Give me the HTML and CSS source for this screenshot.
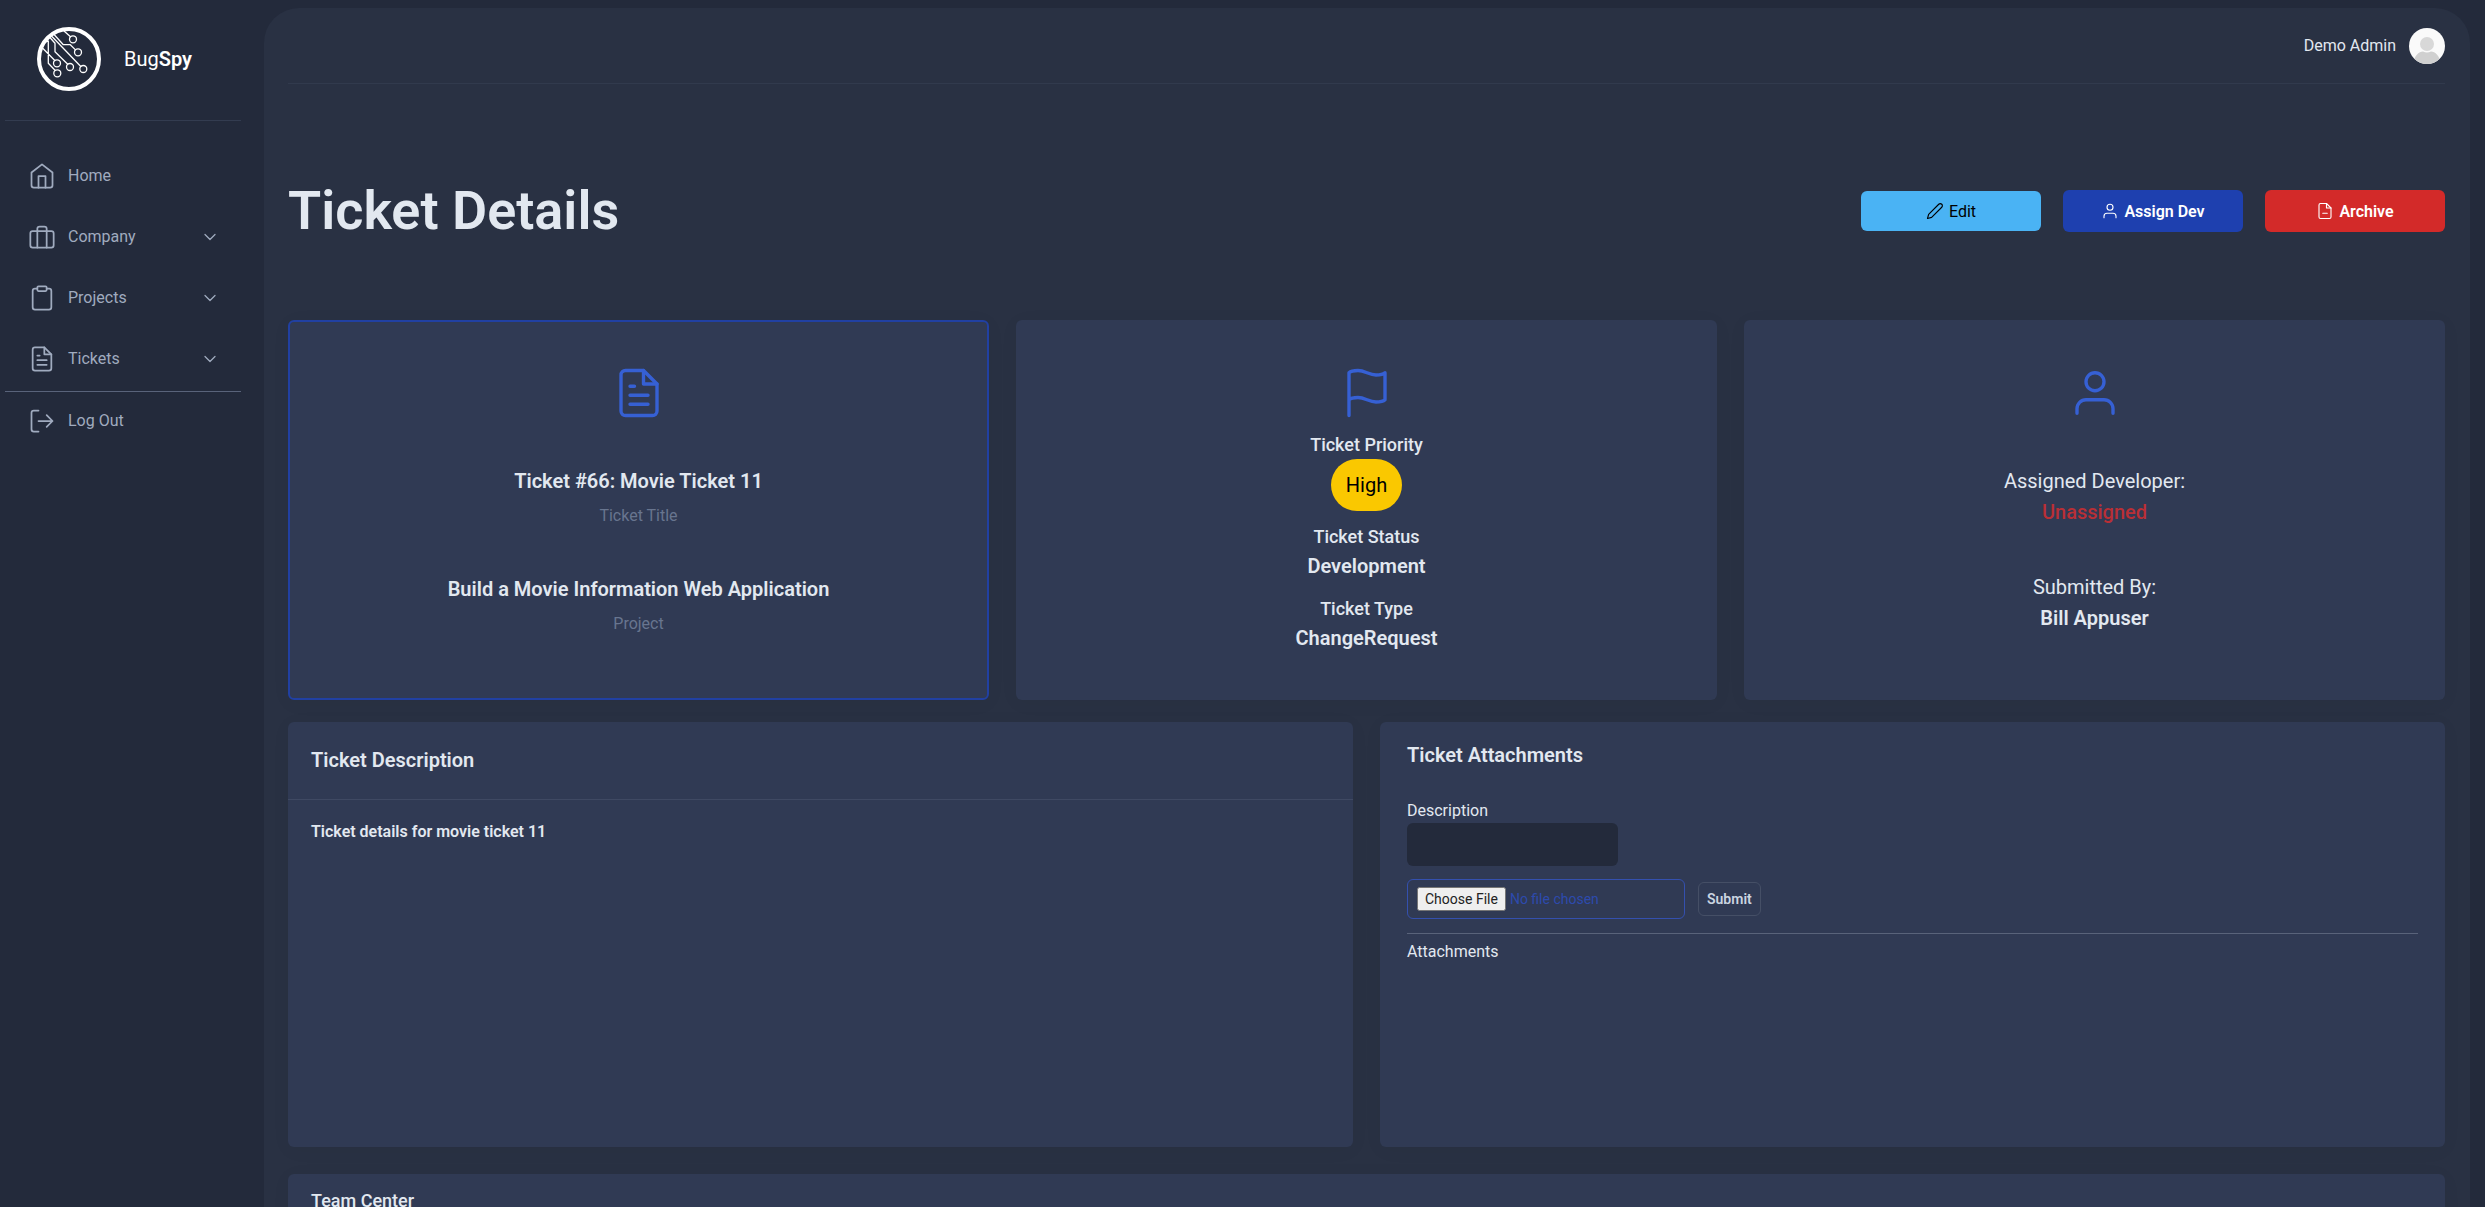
FILE: index.html
```
<!DOCTYPE html>
<html lang="en">
    <head>
        <title>BugSpy - Ticket Details</title>
        <meta charset="utf-8"/>
        <meta name="viewport" content="width=device-width,initial-scale=1"/>
        <link rel="stylesheet" href="styles.css">
    </head>
    <body>
        <div class="page">
            <aside class="sidebar">
                <a class="brand" href="#">
                    <svg class="brand-logo" viewBox="0 0 64 64">
                        <circle cx="32" cy="32" r="30" stroke-width="4"/>
                        <path d="M27 4l6.500 5.800M17.300 7.700l9 10h7l5.200 5.200M14 8.500l29.800 31M12.500 10l5.500 6.300v8.400l12.500 12.300M5 20.500l12.800 13M8 15l3.300 -1v22.300l6.700 7"/>
                        <circle cx="36" cy="12.300" r="3.500"/>
                        <circle cx="41" cy="25.300" r="3.500"/>
                        <circle cx="46.300" cy="42" r="3.500"/>
                        <circle cx="33" cy="40" r="3.500"/>
                        <circle cx="20" cy="36.300" r="3.500"/>
                        <circle cx="20.300" cy="46.300" r="3.500"/>
                    </svg>
                    <span>Bug<b>Spy</b></span>
                </a>
                <hr class="line-soft">
                <ul class="menu">
                    <li><a href="#">
                        <svg class="icon" viewBox="0 0 24 24"><path d="M3 9l9-7 9 7v11a2 2 0 0 1-2 2H5a2 2 0 0 1-2-2z"/><path d="M9 22V12h6v10"/></svg>
                        <span>Home</span>
                    </a></li>
                    <li><a href="#">
                        <svg class="icon" viewBox="0 0 24 24"><rect x="2" y="7" width="20" height="14" rx="2"/><path d="M16 21V5a2 2 0 0 0-2-2h-4a2 2 0 0 0-2 2v16"/></svg>
                        <span>Company</span>
                        <svg class="arrow" viewBox="0 0 24 24"><path d="M6 9l6 6 6-6"/></svg>
                    </a></li>
                    <li><a href="#">
                        <svg class="icon" viewBox="0 0 24 24"><path d="M16 4h2a2 2 0 0 1 2 2v14a2 2 0 0 1-2 2H6a2 2 0 0 1-2-2V6a2 2 0 0 1 2-2h2"/><rect x="8" y="2" width="8" height="4" rx="1"/></svg>
                        <span>Projects</span>
                        <svg class="arrow" viewBox="0 0 24 24"><path d="M6 9l6 6 6-6"/></svg>
                    </a></li>
                    <li><a href="#">
                        <svg class="icon" viewBox="0 0 24 24"><path d="M14 2H6a2 2 0 0 0-2 2v16a2 2 0 0 0 2 2h12a2 2 0 0 0 2-2V8z"/><path d="M14 2v6h6M16 13H8M16 17H8M10 9H8"/></svg>
                        <span>Tickets</span>
                        <svg class="arrow" viewBox="0 0 24 24"><path d="M6 9l6 6 6-6"/></svg>
                    </a></li>
                </ul>
                <hr class="line">
                <ul class="menu menu-bottom">
                    <li><a href="#">
                        <svg class="icon" viewBox="0 0 24 24"><path d="M9 21H5a2 2 0 0 1-2-2V5a2 2 0 0 1 2-2h4M16 17l5-5-5-5M21 12H9"/></svg>
                        <span>Log Out</span>
                    </a></li>
                </ul>
            </aside>

            <main class="content">
                <header class="topbar">
                    <span>Demo Admin</span>
                    <svg class="avatar" viewBox="0 0 36 36"><rect width="36" height="36" fill="#fafafa"/><circle cx="18" cy="16" r="7" fill="#d8d8d8"/><path d="M4 36c1-8 6-12.500 10-12.500q4 2 8 0c4 0 9 4.500 10 12.500z" fill="#d0d0d0"/></svg>
                </header>

                <div class="title-row">
                    <h1>Ticket Details</h1>
                    <div class="actions">
                        <button type="button" class="btn btn-edit">
                            <svg viewBox="0 0 24 24"><path d="M17 3a2.828 2.828 0 1 1 4 4L7.500 20.500 2 22l1.500-5.500z"/></svg>
                            Edit
                        </button>
                        <button type="button" class="btn btn-assign">
                            <svg viewBox="0 0 24 24"><path d="M20 21v-2a4 4 0 0 0-4-4H8a4 4 0 0 0-4 4v2"/><circle cx="12" cy="7" r="4"/></svg>
                            Assign Dev
                        </button>
                        <button type="button" class="btn btn-archive">
                            <svg viewBox="0 0 24 24"><path d="M14 2H6a2 2 0 0 0-2 2v16a2 2 0 0 0 2 2h12a2 2 0 0 0 2-2V8z"/><path d="M14 2v6h6M9 15h6"/></svg>
                            Archive
                        </button>
                    </div>
                </div>

                <section class="row info">
                    <div class="card card-active">
                        <svg class="card-icon" viewBox="0 0 24 24"><path d="M14 2H6a2 2 0 0 0-2 2v16a2 2 0 0 0 2 2h12a2 2 0 0 0 2-2V8z"/><path d="M14 2v6h6M16 13H8M16 17H8M10 9H8"/></svg>
                        <div class="group">
                            <h3>Ticket #66: Movie Ticket 11</h3>
                            <p class="muted">Ticket Title</p>
                        </div>
                        <div class="group">
                            <h3>Build a Movie Information Web Application</h3>
                            <p class="muted">Project</p>
                        </div>
                    </div>
                    <div class="card">
                        <svg class="card-icon" viewBox="0 0 24 24"><path d="M4 15s1-1 4-1 5 2 8 2 4-1 4-1V3s-1 1-4 1-5-2-8-2-4 1-4 1zM4 22v-7"/></svg>
                        <h4 class="first">Ticket Priority</h4>
                        <span class="badge">High</span>
                        <h4>Ticket Status</h4>
                        <h3>Development</h3>
                        <h4>Ticket Type</h4>
                        <h3>ChangeRequest</h3>
                    </div>
                    <div class="card">
                        <svg class="card-icon" viewBox="0 0 24 24"><path d="M20 21v-2a4 4 0 0 0-4-4H8a4 4 0 0 0-4 4v2"/><circle cx="12" cy="7" r="4"/></svg>
                        <div class="group people">
                            <p>Assigned Developer:</p>
                            <p class="unassigned">Unassigned</p>
                        </div>
                        <div class="group people">
                            <p>Submitted By:</p>
                            <h3>Bill Appuser</h3>
                        </div>
                    </div>
                </section>

                <section class="row details">
                    <div class="panel">
                        <h3 class="panel-head">Ticket Description</h3>
                        <p class="panel-body">Ticket details for movie ticket 11</p>
                    </div>
                    <div class="panel attachments">
                        <h3>Ticket Attachments</h3>
                        <form>
                            <label for="description">Description</label>
                            <input type="text" id="description" class="text-input">
                            <div class="upload">
                                <input type="file" class="file-input" aria-label="Choose file">
                                <button type="submit" class="btn-submit">Submit</button>
                            </div>
                        </form>
                        <hr class="line">
                        <p>Attachments</p>
                    </div>
                </section>

                <section class="panel team">
                    <h4>Team Center</h4>
                </section>
            </main>
        </div>
    </body>
</html>
```
FILE: styles.css
```
*{
    box-sizing:border-box;
}
body{
    margin:0;
    background-color:#232a3b;
    color:#e2e8f0;
    font-family:Roboto, "Liberation Sans", sans-serif;
    font-size:16px;
    line-height:24px;
}
h1, h3, h4, p, ul{
    margin:0;
    padding:0;
    font-weight:500;
}
h3{
    font-size:20px;
    font-weight:600;
    line-height:28px;
}
h4{
    font-size:18px;
    line-height:24px;
}
p{
    font-weight:400;
}
hr{
    width:100%;
    height:1px;
    margin:0;
    border:0;
}
svg{
    flex:none;
    fill:none;
    stroke:currentColor;
    stroke-width:1.5;
    stroke-linecap:round;
    stroke-linejoin:round;
}
button, input{
    font-family:inherit;
}
.page{
    display:flex;
    height:100vh;
    overflow:hidden;
    padding:8px 15px 0 0;
}
.line{
    background-color:#59637a;
}
.line-soft{
    background-color:#333c50;
}

/* sidebar */
.sidebar{
    flex:none;
    width:264px;
    padding:19px 23px 0 5px;
}
.brand{
    display:flex;
    align-items:center;
    gap:23px;
    padding:0 0 29px 32px;
    color:#fff;
    font-size:20px;
    text-decoration:none;
}
.brand b{
    font-weight:600;
}
.brand-logo{
    width:64px;
    height:64px;
    stroke-width:1.3;
}
.menu{
    display:flex;
    flex-direction:column;
    gap:16px;
    padding:32px 0 10px;
    list-style:none;
}
.menu-bottom{
    padding-top:6px;
}
.menu a{
    display:flex;
    align-items:center;
    height:45px;
    padding:0 21px 0 23px;
    color:#a0abbf;
    font-weight:400;
    text-decoration:none;
}
.menu .icon{
    width:28px;
    height:28px;
    margin-right:12px;
}
.menu .arrow{
    width:20px;
    height:20px;
    margin-left:auto;
}

/* content */
.content{
    flex:1;
    min-width:0;
    display:flex;
    flex-direction:column;
    padding:0 25px 0 24px;
    background-color:#293143;
    border-radius:35px 35px 0 0;
}
.topbar{
    display:flex;
    justify-content:flex-end;
    align-items:center;
    gap:13px;
    padding:20px 0 19px;
    border-bottom:1px solid #313a4d;
}
.topbar span{
    line-height:36px;
}
.avatar{
    width:36px;
    height:36px;
    border-radius:50%;
    stroke:none;
}
.title-row{
    display:flex;
    justify-content:space-between;
    align-items:center;
    margin:99px 0 81px;
}
.title-row h1{
    font-size:54px;
    font-weight:600;
    line-height:56px;
}
.actions{
    display:flex;
    align-items:center;
    gap:22px;
}
.btn{
    display:flex;
    align-items:center;
    justify-content:center;
    gap:5px;
    width:180px;
    height:42px;
    border:0;
    border-radius:6px;
    color:#fff;
    font-size:16px;
    font-weight:600;
}
.btn svg{
    width:18px;
    height:18px;
}
.btn-edit{
    height:40px;
    background-color:#4ab3f4;
    color:#000;
    font-weight:400;
}
.btn-assign{
    background-color:#1e40af;
}
.btn-archive{
    background-color:#d32a29;
}
.row{
    display:grid;
    gap:27px;
}
.info{
    grid-template-columns:repeat(3, 1fr);
    margin-bottom:22px;
}
.card, .panel{
    background-color:#303a54;
    border-radius:6px;
    box-shadow:0 3px 20px rgba(0,0,0,0.04);
}
.card{
    display:flex;
    flex-direction:column;
    align-items:center;
    min-height:380px;
    padding:44px 20px;
    border:2px solid transparent;
    text-align:center;
}
.card-active{
    border-color:#2140a2;
}
.card-icon{
    width:54px;
    height:54px;
    color:#3660d4;
}
.group{
    margin-top:47px;
}
.muted{
    margin-top:9px;
    color:#68758f;
}
.card h4{
    margin-top:14px;
}
.card h3 + h4{
    margin-top:17px;
}
.card h4 + h3{
    margin-top:3px;
}
.card .first{
    margin-top:13px;
}
.badge{
    margin-top:2px;
    padding:12px 15px;
    border-radius:26px;
    background-color:#fac800;
    color:#000;
    font-size:20px;
    line-height:28px;
}
.people p{
    font-size:20px;
    line-height:28px;
    margin-bottom:3px;
}
.people .unassigned{
    margin-bottom:0;
    color:#b92f36;
    font-weight:500;
}
.details{
    grid-template-columns:repeat(2, 1fr);
    min-height:425px;
    margin-bottom:27px;
}
.panel-head{
    padding:24px 23px 25px;
    border-bottom:1px solid #3f4963;
}
.panel-body{
    padding:20px 23px;
    font-weight:600;
}
.attachments{
    padding:19px 27px;
}
.attachments form{
    display:flex;
    flex-direction:column;
    align-items:flex-start;
    padding:30px 0 14px;
}
.text-input{
    width:211px;
    height:43px;
    padding:0 12px;
    border:0;
    border-radius:6px;
    background-color:#232a3b;
    color:#e2e8f0;
    font-size:16px;
}
.upload{
    display:flex;
    align-items:center;
    gap:13px;
    margin-top:13px;
}
.file-input{
    width:278px;
    height:40px;
    padding:7px 9px;
    border:1px solid #3450ae;
    border-radius:6px;
    color:#2d4aad;
    font-size:14px;
}
.file-input::file-selector-button{
    height:24px;
    color:#222;
    font-family:inherit;
    font-size:14px;
}
.btn-submit{
    height:34px;
    padding:0 8px;
    border:1px solid #454f66;
    border-radius:6px;
    background-color:transparent;
    color:#cbd5e1;
    font-size:14px;
    font-weight:600;
}
.attachments p{
    margin-top:6px;
}
.team{
    flex:1;
    padding:15px 23px;
}
```
